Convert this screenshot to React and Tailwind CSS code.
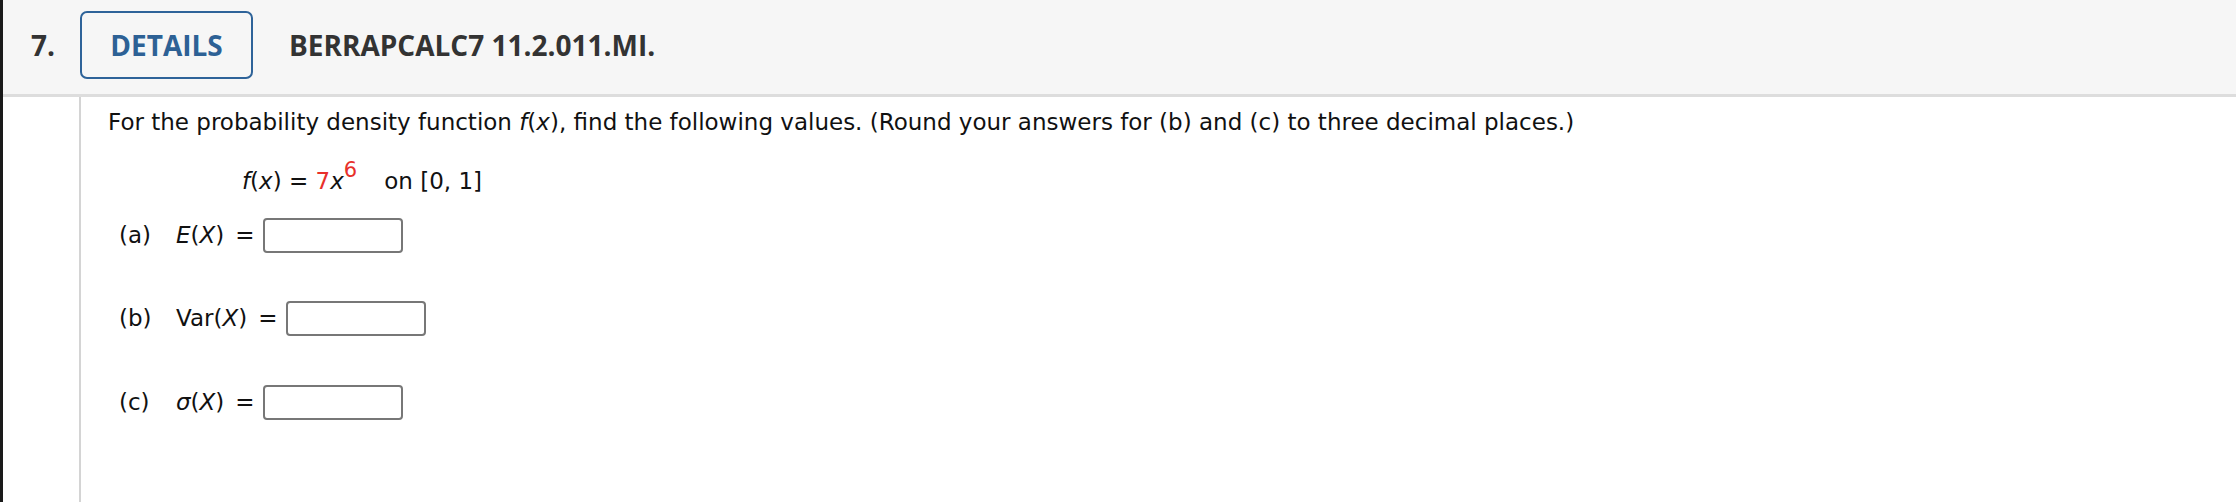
import React from "react";

const serif = { fontFamily: '"DejaVu Sans", Verdana, sans-serif' };

function Row({ label, expr, className = "" }) {
  return (
    <div className={`flex items-center h-[36px] ${className}`}>
      <span className="w-[57px]">{label}</span>
      <span className="whitespace-nowrap">{expr}</span>
      <span className="ml-[11px]">=</span>
      <span className="ml-[8px] inline-block w-[140px] h-[35px] border-2 border-[#777777] rounded-[4px] bg-white"></span>
    </div>
  );
}

export default function App() {
  return (
    <div className="w-[2236px] h-[502px] flex bg-white overflow-hidden">
      <div className="w-[3px] h-full bg-[#1a1a1a] shrink-0"></div>
      <div className="flex-1 flex flex-col">
        <header
          className="h-[97px] shrink-0 bg-[#f6f6f6] border-b-[3px] border-[#dddddd] flex items-center pb-[4px] text-[#333333] font-bold text-[28px]"
          style={{ fontFamily: '"Open Sans", sans-serif' }}
        >
          <span className="ml-[28px] w-[49px]">7.</span>
          <div className="w-[173px] h-[68px] border-2 border-[#2e6399] rounded-[7px] flex items-center justify-center text-[#2d6195]">
            DETAILS
          </div>
          <span className="ml-[36px]">BERRAPCALC7 11.2.011.MI.</span>
        </header>
        <div className="flex-1 flex">
          <div className="w-[76px] shrink-0"></div>
          <div className="w-[2px] bg-[#d4d4d4] shrink-0"></div>
          <div className="flex-1 pl-[27px] pt-[11px] text-[23px] text-[#111111]" style={serif}>
            <p className="leading-[28px] whitespace-nowrap">
              For the probability density function <i>f</i>(<i>x</i>), find the following values. (Round your answers for (b) and (c) to three decimal places.)
            </p>
            <p className="mt-[31px] ml-[134px] leading-[28px] whitespace-nowrap">
              <i>f</i>(<i>x</i>) = <span className="text-[#e8302a]">7</span>
              <i>x</i>
              <sup className="text-[#e8302a] text-[21px] top-[-0.55em]">6</sup>
              <span className="ml-[27px]">on [0, 1]</span>
            </p>
            <Row
              className="mt-[22px] ml-[11px]"
              label="(a)"
              expr={<><i>E</i>(<i>X</i>)</>}
            />
            <Row
              className="mt-[47px] ml-[11px]"
              label="(b)"
              expr={<>Var(<i>X</i>)</>}
            />
            <Row
              className="mt-[48px] ml-[11px]"
              label="(c)"
              expr={<><i>σ</i>(<i>X</i>)</>}
            />
          </div>
        </div>
      </div>
    </div>
  );
}
